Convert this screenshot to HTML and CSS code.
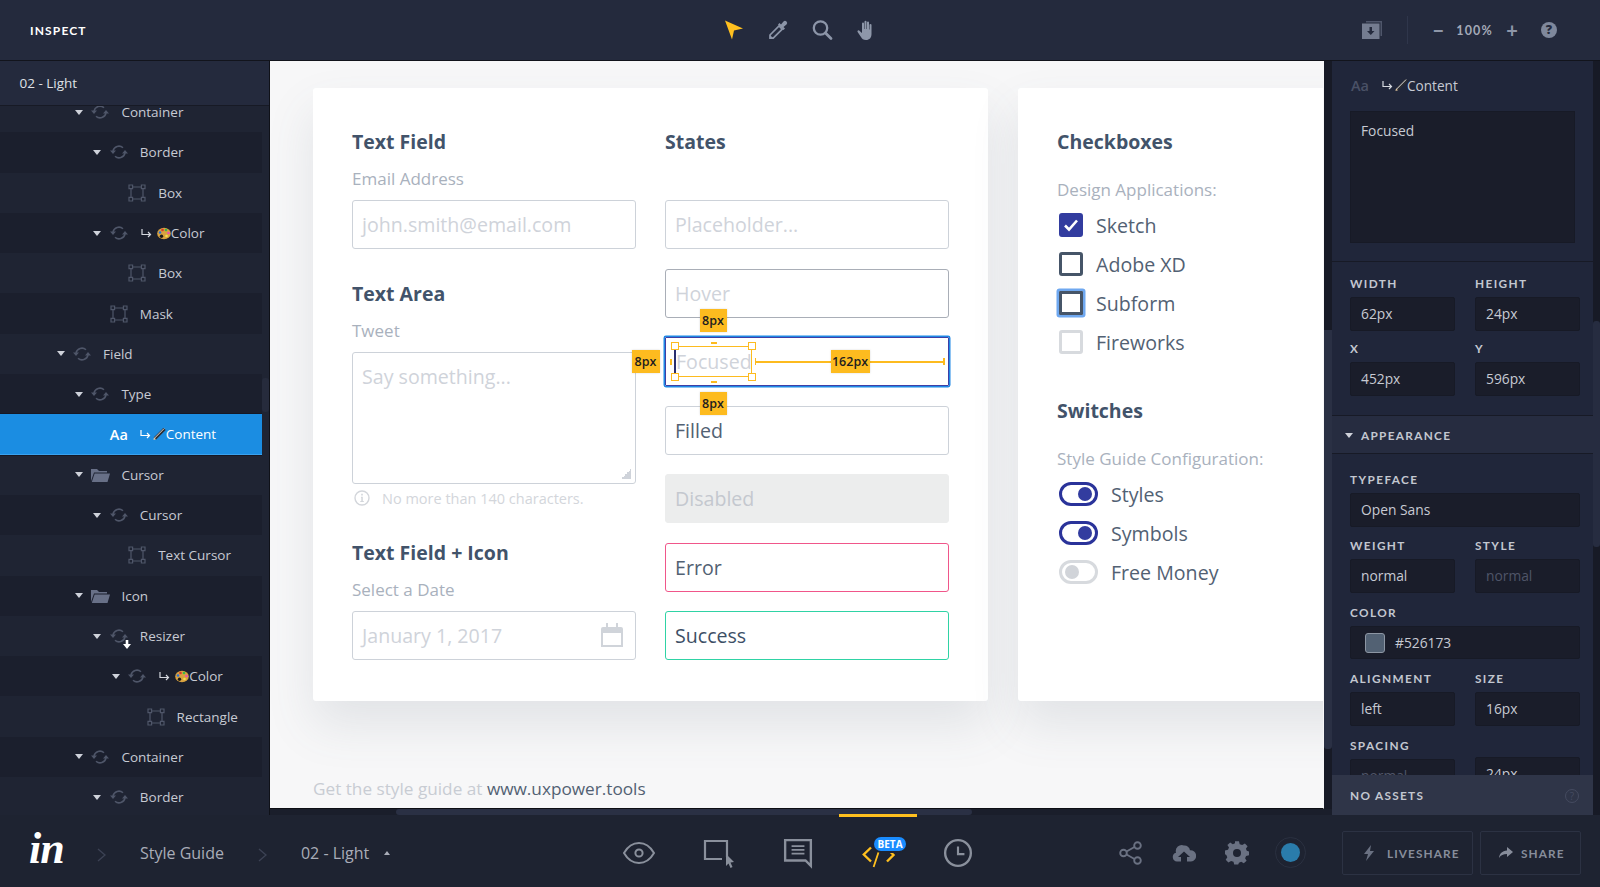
FILE: index.html
```html
<!DOCTYPE html>
<html lang="en">
<head>
<meta charset="utf-8">
<title>Inspect</title>
<link rel="stylesheet" href="styles.css">
</head>
<body>
<svg class="defs" width="0" height="0" aria-hidden="true">
  <symbol id="sync" viewBox="0 0 18 18"><path d="M3 8A6 6 0 0 1 13 4.800M15 10A6 6 0 0 1 5 13.200" fill="none" stroke="currentColor" stroke-width="1.500"/><path d="M0 7.500h6L3 11zM12 10.500h6L15 7z" fill="currentColor"/></symbol>
  <symbol id="box" viewBox="0 0 18 18"><path d="M3 3h12v12H3z" fill="none" stroke="currentColor" stroke-width="1.200"/><path d="M1 1h3.600v3.600H1zM13.400 1H17v3.600h-3.600zM1 13.400h3.600V17H1zM13.400 13.400H17V17h-3.600z" fill="#1f2433" stroke="currentColor" stroke-width="1.200"/></symbol>
  <symbol id="folder" viewBox="0 0 20 14"><path d="M1 13V1h6l2 2h8v1.500H4L1 13z" fill="currentColor"/><path d="M4.600 5.500H20L17.500 14H1.800z" fill="currentColor"/></symbol>
  <symbol id="hook" viewBox="0 0 11 9"><path d="M1 0v5.500h8M7 3l2.500 2.500L7 8" fill="none" stroke="currentColor" stroke-width="1.200"/></symbol>
  <symbol id="palette" viewBox="0 0 14 12"><ellipse cx="7" cy="6" rx="6.800" ry="5.800" fill="#d9a23f"/><circle cx="3" cy="5" r="1.300" fill="#2a6fd6"/><circle cx="5.500" cy="2.500" r="1.300" fill="#d8362f"/><circle cx="9" cy="2.500" r="1.300" fill="#3bb54a"/><circle cx="11.500" cy="5.500" r="1.300" fill="#e84fb0"/><circle cx="4.500" cy="8.800" r="1.700" fill="#1b1b1b"/><circle cx="9.500" cy="8.500" r="1.300" fill="#f2e14c"/></symbol>
  <symbol id="pencil" viewBox="0 0 14 14"><path d="M13 1L2.500 11.500" stroke="#2f2f33" stroke-width="3.400"/><path d="M12.500 .6L2 11.100" stroke="#e9e9e9" stroke-width="1"/><path d="M1 13l.8-2.800 2 2z" fill="#e5c9a0"/></symbol>
</svg>

<div class="app">
  <header class="topbar">
    <div class="title">INSPECT</div>
    <div class="tools">
      <svg class="tool" viewBox="0 0 22 22"><path d="M2 1.500L20 9.500 11 11.500 9 20.500z" fill="#ffc01f"/></svg>
      <svg class="tool" viewBox="0 0 22 22"><path d="M3 16L12 7l3.200 3.200-9 9H3z" fill="none" stroke="#8c95a8" stroke-width="1.700"/><path d="M3 16l3.200 3.200H2.600z" fill="#8c95a8"/><path d="M11 5.500l1.500-1.500 1.500 1.500 2.500-3a2 2 0 0 1 3 3l-3 2.500 1.500 1.500-1.500 1.500z" fill="#8c95a8"/></svg>
      <svg class="tool" viewBox="0 0 22 22"><circle cx="9.500" cy="9" r="6.700" fill="none" stroke="#8c95a8" stroke-width="2.300"/><path d="M14.500 14l5.500 5.500" stroke="#8c95a8" stroke-width="2.800" stroke-linecap="round"/></svg>
      <svg class="tool" viewBox="0 0 22 22"><path d="M7 4.600a1 1 0 0 1 2 0V10h.5V2.800a1 1 0 0 1 2 0V10h.5V3.600a1 1 0 0 1 2 0V10.500h.5V6a1 1 0 0 1 2 0v9c0 3.700-2 6-5.500 6-2.700 0-4-1.200-5-3L2.600 13c-.6-1.200.9-2.200 1.800-1.300L7 14z" fill="#8e97a9"/></svg>
    </div>
    <div class="top-right">
      <svg class="download" viewBox="0 0 20 18"><path d="M4 0h16v15h-1.500V1.500H4z" fill="#4f566b"/><path d="M0 2.500h17.500V18H0z" fill="#747c90"/><path d="M7.500 6h2.500v4h2.500l-3.700 4-3.800-4h2.500z" fill="#242a3d"/></svg>
      <span class="vrule"></span>
      <span class="pm">−</span>
      <span class="percent">100%</span>
      <span class="pm">+</span>
      <span class="help">?</span>
    </div>
  </header>

  <main class="main">
    <aside class="layers">
      <div class="layers-head">02 - Light</div>
      <div class="layers-body">
        <div class="layer-list">
          <div class="row d1"><i class="caret"></i><svg class="ico"><use href="#sync"/></svg><span class="name">Container</span></div>
          <div class="row alt d2"><i class="caret"></i><svg class="ico"><use href="#sync"/></svg><span class="name">Border</span></div>
          <div class="row d3"><i class="nocaret"></i><svg class="ico"><use href="#box"/></svg><span class="name">Box</span></div>
          <div class="row alt d2"><i class="caret"></i><svg class="ico"><use href="#sync"/></svg><svg class="hook"><use href="#hook"/></svg><svg class="emoji"><use href="#palette"/></svg><span class="tight">Color</span></div>
          <div class="row d3"><i class="nocaret"></i><svg class="ico"><use href="#box"/></svg><span class="name">Box</span></div>
          <div class="row alt d2"><i class="nocaret"></i><svg class="ico"><use href="#box"/></svg><span class="name">Mask</span></div>
          <div class="row d0"><i class="caret"></i><svg class="ico"><use href="#sync"/></svg><span class="name">Field</span></div>
          <div class="row alt d1"><i class="caret"></i><svg class="ico"><use href="#sync"/></svg><span class="name">Type</span></div>
          <div class="row selected d2"><i class="nocaret"></i><span class="aa">Aa</span><svg class="hook"><use href="#hook"/></svg><svg class="emoji"><use href="#pencil"/></svg><span class="tight">Content</span></div>
          <div class="row d1"><i class="caret"></i><svg class="ico fold"><use href="#folder"/></svg><span class="name">Cursor</span></div>
          <div class="row alt d2"><i class="caret"></i><svg class="ico"><use href="#sync"/></svg><span class="name">Cursor</span></div>
          <div class="row d3"><i class="nocaret"></i><svg class="ico"><use href="#box"/></svg><span class="name">Text Cursor</span></div>
          <div class="row alt d1"><i class="caret"></i><svg class="ico fold"><use href="#folder"/></svg><span class="name">Icon</span></div>
          <div class="row d2"><i class="caret"></i><span class="ico-wrap"><svg class="ico"><use href="#sync"/></svg><svg class="down" viewBox="0 0 8 9"><path d="M2.700 0h2.600v4H8L4 9 0 4h2.700z" fill="#fff"/></svg></span><span class="name">Resizer</span></div>
          <div class="row alt d3"><i class="caret"></i><svg class="ico"><use href="#sync"/></svg><svg class="hook"><use href="#hook"/></svg><svg class="emoji"><use href="#palette"/></svg><span class="tight">Color</span></div>
          <div class="row d4"><i class="nocaret"></i><svg class="ico"><use href="#box"/></svg><span class="name">Rectangle</span></div>
          <div class="row alt d1"><i class="caret"></i><svg class="ico"><use href="#sync"/></svg><span class="name">Container</span></div>
          <div class="row d2"><i class="caret"></i><svg class="ico"><use href="#sync"/></svg><span class="name">Border</span></div>
        </div>
        <div class="layers-scroll"><div class="layers-thumb"></div></div>
      </div>
    </aside>

    <section class="stage">
      <div class="stage-top">
        <div class="canvas">
          <div class="cards">
            <div class="card card-main">
              <div class="col">
                <div class="group">
                  <h2>Text Field</h2>
                  <div class="label">Email Address</div>
                  <div class="field ph">john.smith@email.com</div>
                </div>
                <div class="group">
                  <h2>Text Area</h2>
                  <div class="label">Tweet</div>
                  <div class="field area ph">Say something...<span class="resize"></span></div>
                  <div class="hint">
                    <svg class="info" viewBox="0 0 16 16"><circle cx="8" cy="8" r="7" fill="none" stroke="#d3d6db" stroke-width="1.400"/><path d="M7 6.800h1.800v4.200h1v1H6.300v-1h1V7.800H7zM7.200 3.800h1.600v1.700H7.200z" fill="#d3d6db"/></svg>
                    No more than 140 characters.
                  </div>
                </div>
                <div class="group">
                  <h2>Text Field + Icon</h2>
                  <div class="label">Select a Date</div>
                  <div class="field ph with-icon">January 1, 2017
                    <svg class="cal" viewBox="0 0 22 26"><path d="M2 6h18a1 1 0 0 1 1 1v17H1V7a1 1 0 0 1 1-1z" fill="none" stroke="#d0d4da" stroke-width="2"/><path d="M1 6h20v5H1zM5 1h2v6H5zM15 1h2v6h-2z" fill="#d0d4da"/></svg>
                  </div>
                </div>
              </div>
              <div class="col">
                <h2>States</h2>
                <div class="states">
                  <div class="field ph">Placeholder...</div>
                  <div class="field ph hover">Hover</div>
                  <div class="field ph focused">Focused
                    <div class="sel"><span class="caret-line"></span>
                      <i class="h tl"></i><i class="h tr"></i><i class="h bl"></i><i class="h br"></i>
                    </div>
                    <i class="tick t-top"></i><i class="tick t-bottom"></i><i class="tick t-left"></i>
                    <div class="rule"></div>
                    <span class="badge b-top">8px</span>
                    <span class="badge b-left">8px</span>
                    <span class="badge b-right">162px</span>
                    <span class="badge b-bottom">8px</span>
                  </div>
                  <div class="field">Filled</div>
                  <div class="field disabled">Disabled</div>
                  <div class="field error">Error</div>
                  <div class="field success">Success</div>
                </div>
              </div>
            </div>
            <div class="card card-side">
              <h2>Checkboxes</h2>
              <div class="label wide">Design Applications:</div>
              <div class="opts">
                <div class="opt"><span class="check on"><svg viewBox="0 0 24 24"><path d="M6 12.500l4 4 8-9" fill="none" stroke="#fff" stroke-width="2.600"/></svg></span>Sketch</div>
                <div class="opt"><span class="check"></span>Adobe XD</div>
                <div class="opt"><span class="check focus"></span>Subform</div>
                <div class="opt"><span class="check off"></span>Fireworks</div>
              </div>
              <h2 class="h-switch">Switches</h2>
              <div class="label wide">Style Guide Configuration:</div>
              <div class="opts">
                <div class="opt"><span class="switch"><i></i></span>Styles</div>
                <div class="opt"><span class="switch"><i></i></span>Symbols</div>
                <div class="opt"><span class="switch sw-off"><i></i></span>Free Money</div>
              </div>
            </div>
          </div>
          <p class="foot">Get the style guide at <span>www.uxpower.tools</span></p>
        </div>
        <div class="vscroll"><div class="vthumb"></div></div>
      </div>
      <div class="hscroll"><div class="hthumb"></div></div>
    </section>

    <aside class="props">
      <div class="props-body">
        <div class="props-scroll">
          <div class="sect first">
            <div class="prop-title"><span class="aa dim">Aa</span><svg class="hook"><use href="#hook"/></svg><svg class="emoji"><use href="#pencil"/></svg><span class="tight">Content</span></div>
            <div class="pfield big">Focused</div>
          </div>
          <div class="sect dims">
            <div class="pgrid">
              <div><div class="plabel">WIDTH</div><div class="pfield">62px</div></div>
              <div><div class="plabel">HEIGHT</div><div class="pfield">24px</div></div>
              <div><div class="plabel">X</div><div class="pfield">452px</div></div>
              <div><div class="plabel">Y</div><div class="pfield">596px</div></div>
            </div>
          </div>
          <div class="sect-head"><i class="caret"></i>APPEARANCE</div>
          <div class="sect appearance">
            <div class="pgrid">
              <div class="span2"><div class="plabel">TYPEFACE</div><div class="pfield">Open Sans</div></div>
              <div><div class="plabel">WEIGHT</div><div class="pfield">normal</div></div>
              <div><div class="plabel">STYLE</div><div class="pfield muted">normal</div></div>
              <div class="span2"><div class="plabel">COLOR</div><div class="pfield colorf"><span class="swatch"></span>#526173</div></div>
              <div><div class="plabel">ALIGNMENT</div><div class="pfield">left</div></div>
              <div><div class="plabel">SIZE</div><div class="pfield">16px</div></div>
              <div><div class="plabel">SPACING</div><div class="pfield muted">normal</div></div>
              <div><div class="plabel">&nbsp;</div><div class="pfield lifted">24px</div></div>
            </div>
          </div>
        </div>
        <div class="assets"><span>NO ASSETS</span><span class="assets-help">?</span></div>
      </div>
      <div class="props-track"><div class="props-thumb"></div></div>
    </aside>
  </main>

  <footer class="bottombar">
    <div class="crumbs">
      <span class="logo">in</span>
      <svg class="chev" viewBox="0 0 9 14"><path d="M1 1l7 6-7 6" fill="none" stroke="#3c4254" stroke-width="1.400"/></svg>
      <span class="crumb">Style Guide</span>
      <svg class="chev" viewBox="0 0 9 14"><path d="M1 1l7 6-7 6" fill="none" stroke="#3c4254" stroke-width="1.400"/></svg>
      <span class="crumb">02 - Light</span>
      <i class="caret-up"></i>
    </div>
    <nav class="modes">
      <div class="mode"><svg viewBox="0 0 32 26"><path d="M1 13C5 6 10 3 16 3s11 3 15 10c-4 7-9 10-15 10S5 20 1 13z" fill="none" stroke="#8a909c" stroke-width="2"/><circle cx="16" cy="13" r="3.600" fill="none" stroke="#8a909c" stroke-width="2"/></svg></div>
      <div class="mode"><svg viewBox="0 0 32 30"><path d="M24 19V3H2v18h17" fill="none" stroke="#8a909c" stroke-width="2.200"/><path d="M23 16l8 8-3.500.5 2 4.500-2 1-2-4.500-2.500 2.500z" fill="#8a909c"/></svg></div>
      <div class="mode"><svg viewBox="0 0 28 28"><path d="M2 2h24v24l-5-5H2z" fill="none" stroke="#8a909c" stroke-width="2.200"/><path d="M8 7.500h12M8 11h12M8 14.500h12" stroke="#8a909c" stroke-width="1.700"/></svg></div>
      <div class="mode active"><svg viewBox="0 0 32 30"><path d="M9 9.500L1.800 16.500 9 23.500M25 10.500l6.500 6.500-6.500 6.500" fill="none" stroke="#ffc01f" stroke-width="2.400"/><path d="M16.600 14l-5 15" stroke="#ffc01f" stroke-width="1.800"/></svg><span class="beta">BETA</span></div>
      <div class="mode"><svg viewBox="0 0 28 28"><circle cx="14" cy="14" r="12" fill="none" stroke="#8a909c" stroke-width="2.200"/><path d="M14 8v7h6" fill="none" stroke="#8a909c" stroke-width="2"/></svg></div>
    </nav>
    <div class="actions">
      <svg class="act" viewBox="0 0 24 24"><circle cx="4.500" cy="12" r="3.300" fill="none" stroke="#6a7182" stroke-width="1.900"/><circle cx="18.500" cy="4.500" r="3.300" fill="none" stroke="#6a7182" stroke-width="1.900"/><circle cx="18.500" cy="19.500" r="3.300" fill="none" stroke="#6a7182" stroke-width="1.900"/><path d="M7.500 10.500l8-4.500M7.500 13.500l8 4.500" stroke="#6a7182" stroke-width="1.900"/></svg>
      <svg class="act" viewBox="0 0 24 24"><path d="M5 20.500a4.500 4.500 0 0 1-1-8.800 6 6 0 0 1 8-7.200 5.500 5.500 0 0 1 6 4.700 4.500 4.500 0 0 1 1 11.300h-4v-4.500h3L12 10.500l-6 5.500h3v4.500z" fill="#6a7182"/></svg>
      <svg class="act" viewBox="0 0 24 24"><path d="M10 2h4l.7 3 2.500 1 2.700-1.600 2.700 2.800L20.900 10l.9 2.200 2.200.8v4l-2.900.8-1 2.400 1.500 2.600-2.800 2.700-2.600-1.500-2.200.9-.8 2.100h-4l-.7-3-2.400-1-2.700 1.600-2.700-2.800 1.600-2.600-1-2.400L0 15.800v-4l3-.7 1-2.500L2.400 6l2.800-2.700L7.800 5l2.200-1z" transform="translate(0 -1.500) scale(1 .93)" fill="#6a7182"/><circle cx="12" cy="12" r="4" fill="#1e2331"/></svg>
      <span class="status"><i></i></span>
      <div class="btns">
        <div class="btn live"><svg viewBox="0 0 12 16"><path d="M8 0L1 9h4l-2 7 8-10H7z" fill="#6a7182"/></svg><span>LIVESHARE</span></div>
        <div class="btn share"><svg viewBox="0 0 14 11"><path d="M8 0l6 5-6 5V7C4 7 2 8 0 11c.5-4.500 3-7 8-7.500z" fill="#878d9b"/></svg><span>SHARE</span></div>
      </div>
    </div>
  </footer>
</div>
</body>
</html>
```
FILE: styles.css
```css
* { box-sizing: border-box; }
html, body { margin: 0; padding: 0; height: 100%; overflow: hidden; background: #1e2331; }
body { font-family: "Open Sans", "Liberation Sans", sans-serif; }
.defs { position: absolute; }
h2 { margin: 0; }

.app { width: 1600px; height: 887px; display: flex; flex-direction: column; }

/* top bar */
.topbar { height: 61px; flex: none; background: #242a3d; border-bottom: 1px solid #12141c; display: grid; grid-template-columns: 1fr auto 1fr; align-items: center; padding: 0 30px; }
.title { font: 700 12px "Lato", sans-serif; letter-spacing: 1.150px; color: #fff; }
.tools { display: flex; gap: 22px; }
.tool { width: 22px; height: 22px; display: block; }
.top-right { display: flex; justify-content: flex-end; align-items: center; color: #8e96a8; padding-right: 13px; }
.download { width: 20px; height: 18px; margin-right: 25px; }
.vrule { width: 1px; height: 28px; background: #2f364b; margin-right: 24px; }
.pm { font: 700 20px "Lato", sans-serif; width: 12px; text-align: center; line-height: 20px; }
.percent { font: 700 12.500px "Lato", sans-serif; letter-spacing: 1.200px; color: #a3a9b7; margin: 0 13px 0 12px; }
.help { width: 16px; height: 16px; border-radius: 50%; background: #7f889c; color: #242a3d; font: 800 12.500px/16px "Open Sans", sans-serif; text-align: center; margin-left: 23px; }

.main { flex: 1; display: flex; min-height: 0; }

/* layers */
.layers { width: 270px; flex: none; display: flex; flex-direction: column; background: #1f2433; border-right: 1px solid #0f1118; }
.layers-head { height: 45px; flex: none; background: #242a3d; border-bottom: 1px solid #171a25; color: #dfe1e6; font-size: 13.500px; line-height: 44px; padding-left: 19.500px; }
.layers-body { flex: 1; display: flex; min-height: 0; overflow: hidden; }
.layer-list { width: 262px; flex: none; margin-top: -14px; }
.layers-scroll { flex: 1; }
.layers-thumb { margin-top: 272px; height: 34px; background: #262b3c; border-radius: 3px; }
.row { height: 40.300px; display: flex; align-items: center; color: #c7cad3; font-size: 13.500px; }
.row.alt { background: #1b1f2d; }
.row.d0 { padding-left: 53px; }
.row.d1 { padding-left: 71.400px; }
.row.d2 { padding-left: 89.800px; }
.row.d3 { padding-left: 108.200px; }
.row.d4 { padding-left: 126.600px; }
.caret, .nocaret { width: 14px; flex: none; display: block; }
.caret { height: 5px; position: relative; }
.caret::before { content: ""; position: absolute; left: 3.500px; top: 0; border: 4px solid transparent; border-top: 5px solid #cfd2da; border-bottom: 0; }
.ico { width: 18px; height: 18px; margin-left: 6px; flex: none; color: #4f5669; display: block; }
.ico.fold { color: #687087; margin-left: 5px; width: 20px; height: 14px; margin-right: -1px; }
.ico-wrap { position: relative; display: block; flex: none; width: 24px; height: 18px; }
.ico-wrap + .name { margin-left: 12px; }
.down { position: absolute; left: 19.500px; top: 13px; width: 8px; height: 9px; }
.name { margin-left: 12px; white-space: nowrap; }
.hook { width: 11px; height: 9px; flex: none; margin-left: 13px; color: #d5d8df; }
.emoji { width: 14px; height: 13px; flex: none; margin-left: 5px; }
.tight { white-space: nowrap; }
.row.selected { background: #1b8de2; color: #fff; border-bottom: 1px solid #3aa2ef; box-shadow: 0 -1px 0 #151825, 0 1px 0 #151825; }
.row.selected .hook { color: #fff; margin-left: 12px; }
.row.selected .emoji { margin-left: 1px; }
.aa { margin-left: 6px; width: 18px; flex: none; font-weight: 600; font-size: 14.500px; color: #fff; }

/* stage */
.stage { width: 1062px; flex: none; display: flex; flex-direction: column; background: #171a26; }
.stage-top { flex: 1; display: flex; min-height: 0; }
.canvas { width: 1054px; flex: none; background: #f7f7f8; overflow: hidden; border-bottom: 1px solid #0d0e14; border-right: 1px solid #f7f7f8; }
.vscroll { flex: 1; }
.vthumb { margin-top: 269px; height: 419px; background: #2a3044; border-radius: 0 0 3px 3px; }
.hscroll { height: 6px; flex: none; background: #1a1e2b; }
.hthumb { margin-left: 126px; width: 576px; height: 6px; background: #2a3044; border-radius: 3px; }

.cards { display: flex; gap: 30px; padding: 27px 0 0 43px; }
.card { background: #fff; height: 613px; flex: none; border-radius: 3px; box-shadow: 0 24px 48px rgba(82, 97, 115, .13); padding: 40px 39px 0; }
.card-main { width: 675px; display: grid; grid-template-columns: 284px 284px; column-gap: 29px; align-content: start; }
.card-side { width: 400px; }
.card h2 { font-size: 19.500px; font-weight: 700; line-height: 28px; color: #42536a; }
.group + .group { margin-top: 31px; }
.label { height: 24px; font-size: 17px; line-height: 24px; color: #a9b1bd; margin-top: 10px; padding-top: .5px; }
.label.wide { margin-top: 21px; }
.field { height: 49px; border: 1px solid #cdd2d9; border-radius: 3px; padding: 0 9px; font-size: 19.600px; line-height: 48px; color: #526173; margin-top: 10px; position: relative; white-space: nowrap; }
.field.ph { color: #cfd3da; }
.area { height: 132px; line-height: 47px; }
.resize { position: absolute; right: 4px; bottom: 4px; width: 10px; height: 10px; background: linear-gradient(135deg, transparent 50%, #cfd3da 50%); }
.hint { display: flex; align-items: center; gap: 12px; height: 20px; margin-top: 4px; padding-left: 2px; font-size: 14.500px; color: #d3d6db; }
.info { width: 16px; height: 16px; }
.cal { position: absolute; right: 12px; top: 10px; width: 22px; height: 26px; }
.states { display: flex; flex-direction: column; gap: 19.500px; margin-top: 44px; }
.states .field { margin-top: 0; }
.hover { border-color: #a9aeb7; }
.focused { z-index: 2; border: 1.500px solid #3f3fa5; border-radius: 1px; box-shadow: 0 0 0 1.500px #1e88e5; line-height: 47px; padding-left: 10px; }
.disabled { background: #eceded; border-color: #eceded; color: #c4c8cf; }
.error { border-color: #f0568a; }
.success { border-color: #2fd3a5; color: #3d4f66; }

/* measure overlay */
.sel { position: absolute; left: 8.500px; top: 7.500px; width: 77px; height: 31px; border: 1.500px solid #fdbb1f; }
.caret-line { position: absolute; left: -1.500px; top: 2px; width: 2px; height: 25px; background: #2a2f6e; }
.h { position: absolute; width: 8px; height: 8px; background: #fff; border: 1.500px solid #fdbb1f; }
.tl { left: -5px; top: -5px; } .tr { right: -5px; top: -5px; }
.bl { left: -5px; bottom: -5px; } .br { right: -5px; bottom: -5px; }
.tick { position: absolute; background: #fdbb1f; }
.t-top { left: 44.500px; top: 3.500px; width: 6px; height: 2px; }
.t-bottom { left: 44.500px; top: 42.500px; width: 6px; height: 2px; }
.t-left { left: 3.500px; top: 20.500px; width: 2px; height: 6px; }
.rule { position: absolute; left: 88.500px; right: 3.500px; top: 22.500px; height: 2px; background: #fdbb1f; }
.rule::before, .rule::after { content: ""; position: absolute; top: -3px; width: 1.500px; height: 7px; background: #fdbb1f; }
.rule::before { left: 0; } .rule::after { right: 0; }
.badge { position: absolute; height: 23px; background: #fdbb1f; color: #1d1d1f; font-size: 12.500px; font-weight: 600; line-height: 23px; text-align: center; box-shadow: 0 0 2px rgba(0, 0, 0, .15); }
.b-top { left: 33.500px; top: -29.500px; width: 27px; }
.b-left { left: -34.500px; top: 11.500px; width: 28px; }
.b-right { left: 164.500px; top: 11.500px; width: 39px; }
.b-bottom { left: 33.500px; top: 53.500px; width: 27px; }

/* checkboxes */
.opts { display: flex; flex-direction: column; gap: 15px; margin-top: 12px; padding-left: 2px; }
.opt { display: flex; align-items: center; gap: 13px; height: 24px; font-size: 19.600px; color: #526173; white-space: nowrap; }
.check { width: 24px; height: 24px; flex: none; border: 3px solid #465568; border-radius: 3px; }
.check svg { width: 24px; height: 24px; display: block; margin: -3px; }
.check.on { background: #323c9f; border-color: #323c9f; }
.check.focus { box-shadow: 0 0 0 2.500px #6fa8f0; border-radius: 1px; }
.check.off { border-color: #d7dade; }
.h-switch { margin-top: 43px; }
.switch { width: 39px; height: 24px; flex: none; border: 3px solid #2a339a; border-radius: 12px; display: flex; align-items: center; justify-content: flex-end; padding: 0 3px; }
.switch i { width: 14px; height: 14px; border-radius: 50%; background: #323c9f; display: block; }
.sw-off { border-color: #d7dade; justify-content: flex-start; }
.sw-off i { background: #d1d4d9; }
.foot { margin: 76px 0 0 43px; font-size: 17.200px; line-height: 24px; color: #c8ccd3; }
.foot span { color: #526173; }

/* props */
.props { flex: 1; display: flex; min-width: 0; background: #171a26; }
.props-body { width: 261px; flex: none; display: flex; flex-direction: column; background: #20263a; }
.props-scroll { flex: 1; min-height: 0; overflow: hidden; }
.props-track { flex: 1; }
.props-thumb { margin-top: 260px; height: 226px; background: #262c40; border-radius: 3px; }
.sect { padding: 0 18px; }
.first { padding-top: 12px; padding-bottom: 18px; border-bottom: 1px solid #171a26; }
.prop-title { display: flex; align-items: center; height: 24px; font-size: 13.600px; color: #c7cad3; }
.aa.dim { margin-left: 1px; color: #4a5166; }
.prop-title .hook { margin-left: 13px; }
.prop-title .emoji { margin-left: 1px; margin-right: -1px; }
.pfield { height: 34px; background: #1a1d2a; border: 1px solid #171a26; border-radius: 2px; color: #c7cad3; font-size: 13.800px; line-height: 31px; padding: 0 10px; white-space: nowrap; }
.pfield.big { height: 132px; margin-top: 14px; padding-top: 3px; border-radius: 0; }
.pfield.muted { color: #4f5568; }
.dims { padding-top: 14px; padding-bottom: 19px; }
.pgrid { display: grid; grid-template-columns: 105px 105px; column-gap: 20px; row-gap: 10px; }
.plabel { font: 700 11.800px/16px "Lato", sans-serif; letter-spacing: 1.400px; color: #c3c7d0; margin-bottom: 5px; }
.span2 { grid-column: span 2; }
.sect-head { height: 39px; background: #262c40; border-top: 1px solid #171a26; border-bottom: 1px solid #171a26; display: flex; align-items: center; font: 700 11.800px "Lato", sans-serif; letter-spacing: 1.300px; color: #c3c7d0; padding: 2px 0 0 11px; }
.sect-head .caret { width: 18px; margin-top: 0; }
.sect-head .caret::before { left: 2px; }
.appearance { padding-top: 18px; }
.appearance .pgrid { row-gap: 11.900px; }
.appearance .plabel { margin-bottom: 5px; }
.appearance .pfield { height: 33.500px; }
.colorf { display: flex; align-items: center; gap: 10px; padding-left: 14px; }
.swatch { width: 20px; height: 20px; border-radius: 3px; background: #526173; border: 1px solid #8d96a3; flex: none; }
.lifted { transform: translateY(-2px); }
.assets { height: 40px; flex: none; background: #2f3548; display: flex; align-items: center; justify-content: space-between; padding: 1px 14px 0 18px; font: 700 11.800px "Lato", sans-serif; letter-spacing: 1.300px; color: #c3c7d0; }
.assets-help { width: 14px; height: 14px; border: 1px solid #454b60; border-radius: 50%; color: #454b60; font: 400 10px/12px "Open Sans", sans-serif; letter-spacing: 0; text-align: center; }

/* bottom */
.bottombar { height: 72px; flex: none; background: #1e2331; display: grid; grid-template-columns: 599px 400px 1fr; align-items: center; padding-top: 3px; }
.crumbs { display: flex; align-items: center; padding-left: 29px; color: #a9adb8; font-size: 16px; }
.logo { font: italic 700 44px/1 "Liberation Serif", serif; color: #fff; width: 36px; letter-spacing: -1px; margin-top: -8px; }
.chev { width: 9px; height: 14px; margin-top: 4px; }
.crumbs .chev:nth-of-type(1) { margin-left: 32px; margin-right: 34px; }
.crumbs .chev:nth-of-type(2) { margin-left: 34px; margin-right: 34px; }
.crumb { white-space: nowrap; }
.caret-up { margin-left: 15px; border: 3.500px solid transparent; border-bottom: 4px solid #a9adb8; border-top: 0; }
.modes { display: flex; height: 100%; }
.mode { width: 79.700px; display: flex; align-items: center; justify-content: center; position: relative; }
.mode svg { width: 32px; height: 30px; display: block; overflow: visible; }
.mode.active::before { content: ""; position: absolute; left: 1px; right: 1px; top: -4px; height: 3px; background: #ffc01f; }
.beta { position: absolute; left: 36px; top: 19px; width: 32px; height: 14px; border-radius: 7px; background: #1a8cff; box-shadow: 0 0 0 2px #1e2331; color: #fff; font: 700 10px/14px "Open Sans", sans-serif; text-align: center; }
.actions { display: flex; align-items: center; justify-content: flex-end; padding-right: 19px; }
.act { width: 24px; height: 24px; margin-right: 29px; }
.status { width: 31px; height: 31px; border: 1px solid #2a3040; border-radius: 50%; display: flex; align-items: center; justify-content: center; margin-left: -3px; margin-right: 36px; }
.status i { width: 19px; height: 19px; border-radius: 50%; background: #2a7cab; display: block; }
.btns { display: flex; gap: 7px; }
.btn { height: 44px; border: 1px solid #2c3243; border-radius: 2px; display: flex; align-items: center; font: 700 11.800px "Lato", sans-serif; letter-spacing: 1.100px; color: #878d9b; }
.btn span { padding-top: 2px; }
.btn.live { width: 131px; padding-left: 20px; gap: 12px; }
.btn.live svg { width: 12px; height: 16px; }
.btn.share { width: 101px; padding-left: 18px; gap: 8px; }
.btn.share svg { width: 14px; height: 11px; }
```
